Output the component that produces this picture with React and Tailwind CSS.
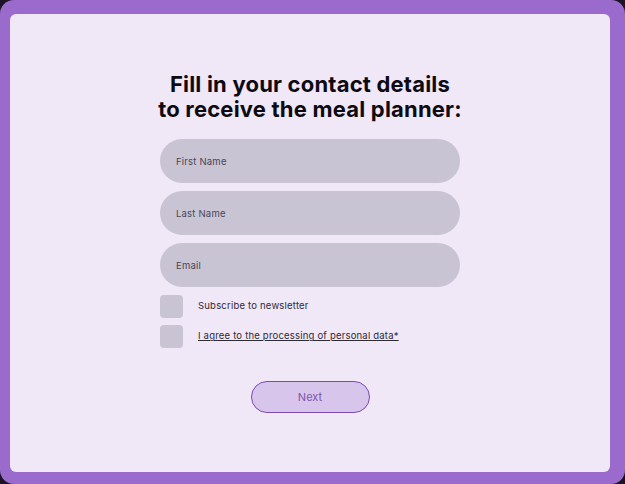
import React from 'react';

const Field = ({ placeholder }) => (
  <input
    type="text"
    placeholder={placeholder}
    className="w-full h-[44px] rounded-[22px] bg-[#c8c4d4] px-4 text-[9.5px] tracking-[0.2px] text-[#3f3a4a] placeholder:text-[#4a4456] outline-none"
  />
);

const Check = ({ children }) => (
  <label className="flex items-center gap-[15px] cursor-pointer">
    <span className="w-[23px] h-[23px] rounded-[4px] bg-[#c8c4d4] shrink-0" />
    <span className="text-[9.5px] tracking-[0.2px] text-[#2e2a36]">{children}</span>
  </label>
);

export default function App() {
  return (
    <div className="w-[625px] h-[484px] bg-[#1c1426]" style={{ fontFamily: 'Inter, "Open Sans", sans-serif' }}>
      <div className="w-full h-full rounded-[14px] bg-[#9a6bcc] pt-[14px] pl-[10px] pr-[15px] pb-[12px]">
        <div className="w-full h-full rounded-[6px] bg-[#f0e7f7] flex flex-col items-center pt-[58px]">
          <h1 className="text-center text-[22px] leading-[25px] font-bold tracking-[0.2px] text-[#0d0a12]">
            Fill in your contact details
            <br />
            to receive the meal planner:
          </h1>
          <div className="w-[300px] mt-[17px] flex flex-col gap-[8px]">
            <Field placeholder="First Name" />
            <Field placeholder="Last Name" />
            <Field placeholder="Email" />
          </div>
          <div className="w-[300px] mt-[8px] flex flex-col gap-[7px]">
            <Check>Subscribe to newsletter</Check>
            <Check>
              <span className="underline">I agree to the processing of personal data*</span>
            </Check>
          </div>
          <button className="mt-[33px] w-[119px] h-[32px] rounded-full border border-[#7b4bb0] bg-[#d8c5ec] text-[11px] text-[#7a55ad]">
            Next
          </button>
        </div>
      </div>
    </div>
  );
}
